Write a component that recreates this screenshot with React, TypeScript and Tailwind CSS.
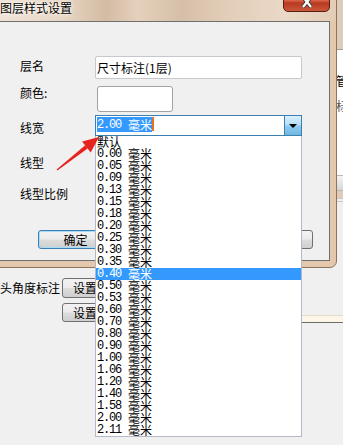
import React from 'react';

const CJK = "font-['Noto_Sans_CJK_SC',sans-serif]";
const MONO = "font-['Liberation_Mono','Noto_Sans_CJK_SC',monospace]";

const widths = [
    '0.00', '0.05', '0.09', '0.13', '0.15', '0.18', '0.20', '0.25', '0.30', '0.35', '0.40', '0.50',
    '0.53', '0.60', '0.70', '0.80', '0.90', '1.00', '1.06', '1.20', '1.40', '1.58', '2.00', '2.11',
];

// "0.00 毫米" with half-width digits like the old bitmap font
const Size: React.FC<{ value: string }> = ({ value }) => (
    <span className="flex items-center">
        <span className={`${MONO} tracking-[-1.2px]`}>{value}</span>
        <span className={`${CJK} ml-[7px]`}>毫米</span>
    </span>
);

const WinButton: React.FC<{ children: React.ReactNode; className?: string; focused?: boolean }> = ({
    children,
    className = '',
    focused = false,
}) => (
    <div
        className={`flex items-center justify-center rounded-[3px] border ${
            focused ? 'border-[#3c7fb1] shadow-[inset_0_0_0_1px_#a6dcf7]' : 'border-[#707070]'
        } bg-[linear-gradient(#f2f2f2,#ebebeb_48%,#dddddd_52%,#cfcfcf)] ${className}`}
    >
        {children}
    </div>
);

export default function App() {
    return (
        <div className={`relative w-[343px] h-[445px] overflow-hidden bg-[#f0f0f0] text-black text-[12px] leading-[12px] ${CJK}`}>
            {/* Window underneath */}
            <div className="flex flex-col pt-[278px]">
                <div className="flex items-center h-[20px]">
                    <span className="w-[62px]">头角度标注</span>
                    <WinButton className="w-[46px] h-[20px]">设置</WinButton>
                </div>
                <div className="flex mt-[5px] h-[19px]">
                    <WinButton className="ml-[62px] w-[46px] h-[19px]">设置</WinButton>
                    <div className="flex-1 mt-[12px] h-[8px] bg-[#fdf5e6] border-t border-t-[#e2dccf] border-b border-b-[#6d6d6d]" />
                </div>
            </div>

            {/* Edge of another window on the right */}
            <div className="absolute left-[336px] top-0 w-[7px] h-[268px] flex flex-col bg-[#e0cdb9]">
                <div className="h-[50px] border-b border-[#9c9c9c]" />
                <div className="h-[125px] bg-white flex flex-col pt-[24px] overflow-hidden">
                    <span className="leading-[13px]">管</span>
                    <span className="mt-[12px] leading-[13px] text-[#555]">标</span>
                </div>
                <div className="h-[16px] bg-[linear-gradient(#f4f4f4,#d6d6d6)] border-y border-[#b8b8b8]" />
                <div className="mt-[7px] h-[4px] border-y border-[#c8c8c8] bg-[#f0f0f0]" />
                <div className="flex-1 bg-[#f0f0f0]" />
            </div>

            {/* Dialog: 图层样式设置 */}
            <div className="absolute left-[-8px] top-[-12px] w-[345px] h-[280px] rounded-[7px] border border-[#8b7560] bg-[#e3c8ad] flex flex-col">
                <div className="relative h-[32px] pl-[7px] pt-[13px] rounded-t-[6px] bg-[linear-gradient(90deg,#efe4d8_0%,#e8d6c4_20%,#d4bba3_33%,#e4d0bc_42%,#d6bfa8_55%,#e2cdb8_68%,#ead9c7_85%,#e4cdb6_100%)]">
                    <span className="[text-shadow:0_0_6px_#fff,0_0_3px_#fff]">图层样式设置</span>
                    <div className="absolute left-[290px] top-[3px] w-[47px] h-[20px] rounded-b-[5px] border border-[#5a1d12] bg-[linear-gradient(#eea48f,#d35a3f_45%,#b8391f_55%,#c9583a)] flex items-center justify-center">
                        <svg width="12" height="12" viewBox="0 0 12 12">
                            <path d="M2 1 L10 11 M10 1 L2 11" stroke="#3b3b3b" strokeWidth="4" />
                            <path d="M2 1 L10 11 M10 1 L2 11" stroke="#ffffff" strokeWidth="2.2" />
                        </svg>
                    </div>
                </div>

                <div className="ml-[6px] w-[331px] h-[240px] border border-[#6f6f6f] bg-[#f0f0f0] flex flex-col pl-[20px]">
                    <div className="flex mt-[34px] h-[23px]">
                        <span className="w-[75px] pt-[4px]">层名</span>
                        <div className="w-[207px] h-[23px] border border-[#c6c8ce] rounded-[2px] bg-white flex items-center pl-[1px]">
                            尺寸标注(1层)
                        </div>
                    </div>
                    <div className="flex mt-[7px] h-[26px]">
                        <span className="w-[77px] pt-[1px]">颜色:</span>
                        <div className="w-[76px] h-[26px] rounded-[3px] border border-[#a2a2a2] bg-white" />
                    </div>
                    <div className="flex mt-[3px] h-[21px]">
                        <span className="w-[75px] pt-[7px]">线宽</span>
                        <div className="w-[207px] h-[21px] border border-[#3c7fb1] bg-white flex">
                            <div className="flex items-start mt-[1px] ml-[1px] h-[15px]">
                                <div className="h-[15px] flex items-center bg-[#3399ff] text-white">
                                    <Size value="2.00" />
                                </div>
                                <div className="w-[2px] h-[14px] bg-[#e8701c]" />
                            </div>
                            <div className="ml-auto w-[17px] h-[19px] border-l border-[#3c7fb1] bg-[linear-gradient(#d9f0fc,#b3dff7_45%,#8ccbef_55%,#6fb7e4)] flex items-center justify-center">
                                <div className="w-0 h-0 border-l-[4px] border-r-[4px] border-t-[4px] border-l-transparent border-r-transparent border-t-black" />
                            </div>
                        </div>
                    </div>
                    <span className="mt-[21px]">线型</span>
                    <span className="mt-[19px]">线型比例</span>
                    <div className="flex mt-[30px] h-[19px] pr-[16px]">
                        <WinButton focused className="ml-[18px] w-[75px] h-[19px]">确定</WinButton>
                        <WinButton className="ml-auto w-[75px] h-[19px]">取消</WinButton>
                    </div>
                </div>
            </div>

            {/* Open drop-down list of 线宽 */}
            <div className="absolute left-[95px] top-[136px] w-[207px] h-[301px] border-x border-b border-[#b4b8c8] bg-white flex flex-col">
                <div className="h-[12px] pl-[1px] flex items-center">默认</div>
                {widths.map(w => (
                    <div
                        key={w}
                        className={`h-[12px] pl-[1px] flex items-center ${w === '0.40' ? 'bg-[#3399ff] text-white' : ''}`}
                    >
                        <Size value={w} />
                    </div>
                ))}
            </div>

            {/* Red annotation arrow */}
            <svg className="absolute left-0 top-0 pointer-events-none" width="343" height="445" viewBox="0 0 343 445">
                <polygon points="56.6,169.5 57.4,170.5 87.6,148.5 85.2,145.3" fill="#e52420" />
                <polygon points="82.1,141.4 99,137 90.7,152.4" fill="#e52420" />
            </svg>
        </div>
    );
}
